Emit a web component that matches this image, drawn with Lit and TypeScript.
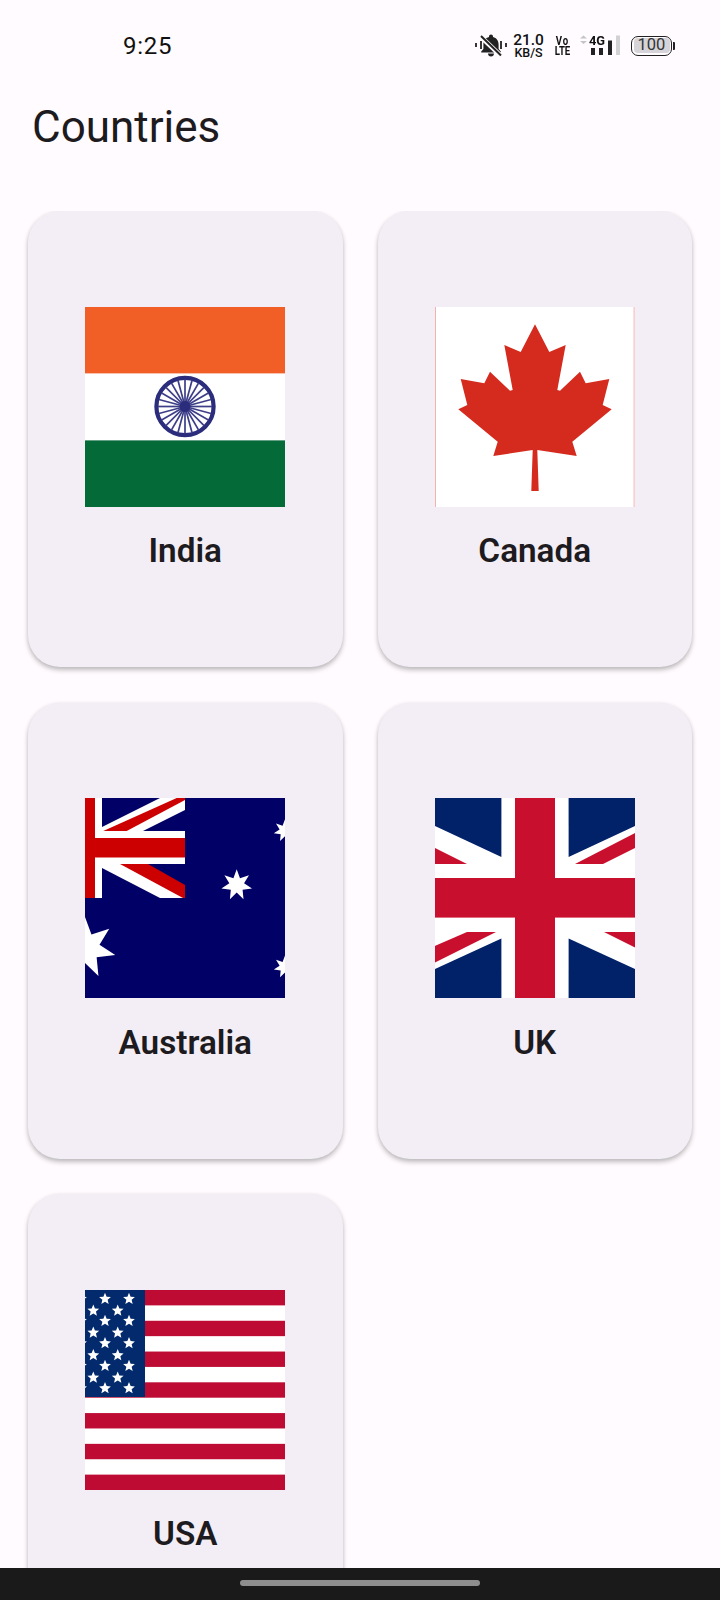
import { LitElement, html, css, svg } from "lit";
import { customElement, property } from "lit/decorators.js";

const star = (cx: number, cy: number, r: number, n = 7, inner = 0.48) => {
  const pts: string[] = [];
  for (let i = 0; i < n * 2; i++) {
    const rad = i % 2 === 0 ? r : r * inner;
    const a = (Math.PI * i) / n;
    pts.push(`${(cx + rad * Math.sin(a)).toFixed(2)},${(cy - rad * Math.cos(a)).toFixed(2)}`);
  }
  return pts.join(" ");
};

const india = () => svg`
  <rect x="-5" y="-5" width="210" height="71.6" fill="#f25f26"/>
  <rect x="-5" y="66.6" width="210" height="66.8" fill="#fff"/>
  <rect x="-5" y="133.4" width="210" height="72" fill="#046a38"/>
  <circle cx="100" cy="99.500" r="28.600" fill="#fff" stroke="#2b2c7c" stroke-width="4.200"/>
  ${Array.from({ length: 24 }, (_, i) => {
    const a = (i * Math.PI) / 12;
    return svg`<line x1="100" y1="99.500" x2="${100 + 27 * Math.sin(a)}" y2="${99.5 - 27 * Math.cos(a)}" stroke="#3d3e88" stroke-width="1.700"/>`;
  })}
  <circle cx="100" cy="99.500" r="5.400" fill="#2b2c7c"/>
`;

const leaf =
  "100,17.3 114.3,45 130.7,38 122.3,83 125,83.7 145,64.7 150.7,76.3 174.3,72 167.7,98 176.7,102.3 137.3,134.7 141.7,149 102.3,143 103.7,184 96.3,184 97.7,143 58.3,149 62.7,134.7 23.3,102.3 32.3,98 25.7,72 49.3,76.3 55,64.7 75,83.7 77.7,83 69.3,38 85.7,45";

const canada = () => svg`
  <rect x="-5" y="-5" width="210" height="210" fill="#fff"/>
  <rect x="0" y="-5" width="1" height="210" fill="#f3b3ad"/>
  <rect x="198.6" y="-5" width="1" height="210" fill="#f3b3ad"/>
  <polygon points="${leaf}" fill="#d52b1e"/>
`;

const australia = () => svg`
  <rect x="-5" y="-5" width="210" height="210" fill="#000066"/>
  <polygon points="17,29 75,0 100,-5 100,12 58,33 17,33" fill="#fff"/>
  <polygon points="17,70 75,100 100,100 100,90 58,66 17,66" fill="#fff"/>
  <polygon points="18.300,33 91.700,0 100,-2 100,2 41.700,33" fill="#cc0000"/>
  <polygon points="35,66 63,66 100,87 100,100 98,100" fill="#cc0000"/>
  <rect x="-5" y="-5" width="22" height="105" fill="#fff"/>
  <rect x="-5" y="33" width="105" height="33" fill="#fff"/>
  <rect x="-5" y="-5" width="15" height="105" fill="#cc0000"/>
  <rect x="-5" y="40" width="105" height="19.500" fill="#cc0000"/>
  <polygon points="${star(151.7, 87, 15.7)}" fill="#fff"/>
  <polygon points="${star(200, 32.7, 11.5)}" fill="#fff"/>
  <polygon points="${star(200, 169, 11.5)}" fill="#fff"/>
  <polygon points="${star(0, 150, 31)}" fill="#fff"/>
`;

const uk = () => svg`
  <rect x="-5" y="-5" width="210" height="210" fill="#fff"/>
  <polygon points="-5,-5 66.400,-5 66.400,59 0,28 -5,25.600" fill="#012169"/>
  <polygon points="205,-5 133.600,-5 133.600,59 200,28 205,25.600" fill="#012169"/>
  <polygon points="-5,205 66.400,205 66.400,140.500 0,171 -5,173.400" fill="#012169"/>
  <polygon points="205,205 133.600,205 133.600,140.500 200,171 205,173.400" fill="#012169"/>
  <polygon points="-5,47.500 0,50 32,66 -5,66" fill="#c8102e"/>
  <polygon points="140,66 168,66 205,47.500 205,32.500" fill="#c8102e"/>
  <polygon points="32,134 61,134 -5,167 -5,150" fill="#c8102e"/>
  <polygon points="169,134 205,134 205,152" fill="#c8102e"/>
  <rect x="80" y="-5" width="40" height="210" fill="#c8102e"/>
  <rect x="-5" y="80" width="210" height="39.600" fill="#c8102e"/>
`;

const usaRows = [9, 20.7, 31, 42.7, 53.3, 65.3, 76, 87.7, 98.3];
const usa = () => svg`
  <rect x="-5" y="-5" width="210" height="210" fill="#fff"/>
  ${Array.from({ length: 7 }, (_, i) =>
    svg`<rect x="-5" y="${i === 0 ? -5 : i * 30.77}" width="210" height="${i === 0 || i === 6 ? 20.38 : 15.38}" fill="#bd0b33"/>`
  )}
  <rect x="-5" y="-5" width="65" height="112" fill="#022a6c"/>
  ${usaRows.map((y, i) =>
    (i % 2 === 0 ? [-4, 20, 44] : [8.3, 32.7]).map(
      (x) => svg`<polygon points="${star(x, y, 6.2, 5, 0.45)}" fill="#fff"/>`
    )
  )}
`;

const flags: Record<string, () => unknown> = { india, canada, australia, uk, usa };

@customElement("country-flag")
class CountryFlag extends LitElement {
  @property() kind = "india";
  static styles = css`
    :host { display: block; width: 200px; height: 200px; }
    svg { display: block; width: 200px; height: 200px; overflow: hidden; }
    .soft { filter: blur(0.6px); }
  `;
  render() {
    return html`<svg viewBox="0 0 200 200"><g class="soft">${flags[this.kind]()}</g></svg>`;
  }
}

const countries = [
  { name: "India", kind: "india" },
  { name: "Canada", kind: "canada" },
  { name: "Australia", kind: "australia" },
  { name: "UK", kind: "uk" },
  { name: "USA", kind: "usa" },
];

@customElement("app-root")
class AppRoot extends LitElement {
  static styles = css`
    :host {
      display: block;
      width: 720px;
      height: 1600px;
      background: #fffbfe;
      font-family: Roboto, "Liberation Sans", sans-serif;
      color: #1d1b20;
      overflow: hidden;
    }
    .page { display: flex; flex-direction: column; height: 1600px; }
    .status {
      flex: none;
      height: 91px;
      display: flex;
      align-items: center;
      justify-content: space-between;
      padding: 0 45px 0 123px;
      color: #111;
    }
    .time { font-size: 24px; font-weight: 400; letter-spacing: 0.7px; }
    .icons { display: flex; align-items: center; height: 24px; }
    .bell { display: block; width: 32px; height: 23px; }
    .speed {
      margin-left: 7px;
      width: 29px;
      display: flex;
      flex-direction: column;
      align-items: center;
    }
    .speed b { font-size: 15.500px; font-weight: 500; line-height: 13px; }
    .speed span { font-size: 12.500px; line-height: 10px; font-weight: 500; margin-top: 1px; white-space: nowrap; }
    .volte {
      margin-left: 12px;
      width: 15px;
      display: flex;
      flex-direction: column;
      align-items: center;
      font-weight: 700;
      font-size: 13px;
      line-height: 10px;
      transform: scaleX(0.74);
    }
    .volte .vo { letter-spacing: 1.500px; }
    .net { margin-left: 8px; position: relative; width: 42px; height: 24px; }
    .net svg { display: block; width: 42px; height: 24px; }
    .net span {
      position: absolute;
      left: 11px;
      top: 0;
      font-size: 13.500px;
      font-weight: 700;
      line-height: 12px;
      transform: scaleX(0.95);
      transform-origin: left;
    }
    .battery { margin-left: 11px; display: flex; align-items: center; gap: 1px; }
    .cell {
      box-sizing: border-box;
      width: 41px;
      height: 20px;
      border: 1.600px solid #222;
      border-radius: 7px;
      padding: 1.500px;
      display: flex;
    }
    .cell span {
      flex: 1;
      background: #d6d4d8;
      border-radius: 4px;
      font-size: 16.500px;
      line-height: 14px;
      text-align: center;
      color: #333;
    }
    .nub { width: 2px; height: 8px; background: #222; border-radius: 0 1px 1px 0; }
    .title {
      flex: none;
      height: 120.300px;
      box-sizing: border-box;
      padding: 0 32px;
      font-size: 44px;
      font-weight: 400;
      line-height: 72px;
      margin: 0;
    }
    .scroll { flex: 1; min-height: 0; overflow: hidden; }
    .grid {
      display: grid;
      grid-template-columns: 1fr 1fr;
      grid-auto-rows: 456px;
      gap: 35.400px 35px;
      padding: 0 28px;
    }
    .card {
      background: #f3eef5;
      border-radius: 32px;
      box-shadow: 0 3px 5px rgba(0, 0, 0, 0.25), 0 0 4px rgba(0, 0, 0, 0.05);
      display: flex;
      flex-direction: column;
      align-items: center;
      padding-top: 95.500px;
      box-sizing: border-box;
    }
    .name { margin-top: 24.500px; font-size: 33.300px; font-weight: 600; line-height: 40px; }
    .nav {
      flex: none;
      height: 32px;
      background: #1a1a1a;
      display: flex;
      justify-content: center;
      padding-top: 12px;
      box-sizing: border-box;
    }
    .pill { width: 240px; height: 6px; border-radius: 3px; background: #8e8e8e; }
  `;

  render() {
    return html`
      <div class="page">
        <div class="status">
          <span class="time">9:25</span>
          <div class="icons">
            <svg class="bell" viewBox="0 0 32 23">
              <path d="M16 0.500c1.200 0 2 .8 2 2v.6c3.600 .9 5.600 3.800 5.600 7.600v4.300l2.200 2.600v1H6.200v-1l2.200-2.600v-4.300c0-3.800 2-6.700 5.600-7.600v-.6c0-1.200 .8-2 2-2zM13 19.500h6c0 1.800-1.300 3-3 3s-3-1.200-3-3z" fill="#222"/>
              <path d="M5 2 L27 23" stroke="#fffbfe" stroke-width="4.500"/>
              <path d="M6 2 L26 21.500" stroke="#222" stroke-width="2"/>
              <path d="M1 9v4M6 7v8M26 7v8M31 9v4" stroke="#222" stroke-width="1.800"/>
            </svg>
            <div class="speed"><b>21.0</b><span>KB/S</span></div>
            <div class="volte"><span class="vo">Vo</span><span>LTE</span></div>
            <div class="net">
              <svg viewBox="0 0 42 24">
                <path d="M2 4.500 L5.500 1.500 L9 4.500zM2 7 L5.500 10 L9 7z" fill="#c4c4c4"/>
                <rect x="13" y="14" width="4" height="7" fill="#222"/>
                <rect x="21" y="14" width="4" height="7" fill="#222"/>
                <rect x="30" y="6.500" width="4" height="14.500" fill="#222"/>
                <rect x="38" y="1.500" width="4" height="19.500" fill="#d2d2d2"/>
              </svg>
              <span>4G</span>
            </div>
            <div class="battery">
              <div class="cell"><span>100</span></div>
              <div class="nub"></div>
            </div>
          </div>
        </div>
        <h1 class="title">Countries</h1>
        <div class="scroll">
          <div class="grid">
            ${countries.map(
              (c) => html`
                <div class="card">
                  <country-flag .kind=${c.kind}></country-flag>
                  <div class="name">${c.name}</div>
                </div>
              `
            )}
          </div>
        </div>
        <div class="nav"><div class="pill"></div></div>
      </div>
    `;
  }
}
